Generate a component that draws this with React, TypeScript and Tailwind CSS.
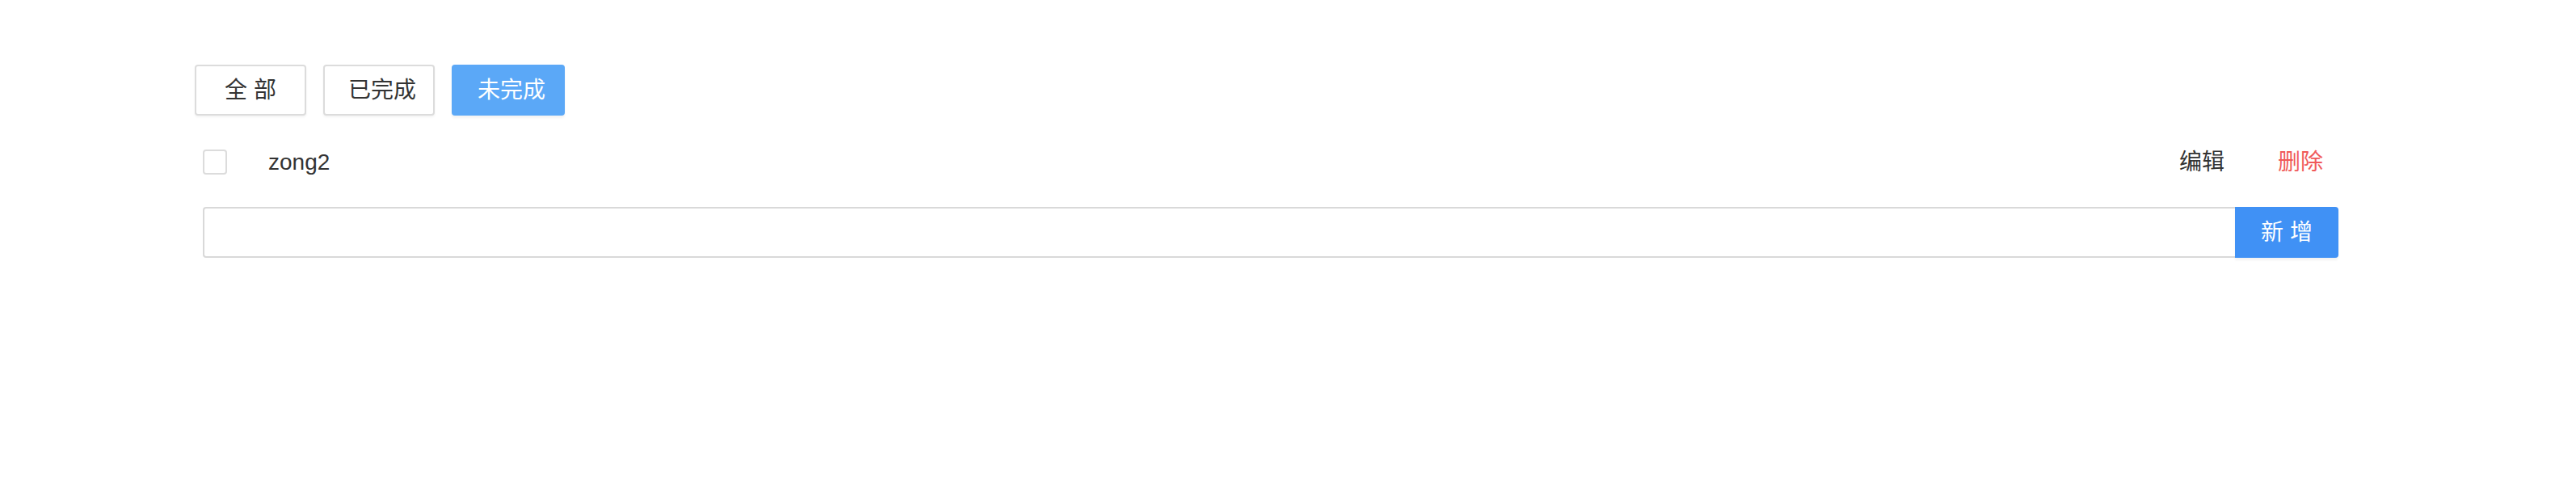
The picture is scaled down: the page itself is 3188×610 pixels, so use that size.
import React from "react";

const font = { fontFamily: '"Liberation Sans", "Noto Sans CJK SC", sans-serif' };

export default function App() {
  return (
    <div className="min-h-[610px] w-full bg-white text-[#333]" style={font}>
      <div className="pl-[241px] pt-[80px]">
        <div className="w-[2653px]">
          <div className="flex items-center gap-[21px]">
            <button className="flex h-[63px] w-[138px] items-center justify-center rounded-[4px] border-2 border-[#dcdcdc] bg-white text-[28px] leading-none text-[#333] shadow-[0_2px_3px_rgba(0,0,0,0.05)]">
              全 部
            </button>
            <button className="flex h-[63px] w-[138px] items-center justify-center rounded-[4px] border-2 border-[#dcdcdc] bg-white pl-[8px] text-[28px] leading-none text-[#333] shadow-[0_2px_3px_rgba(0,0,0,0.05)]">
              已完成
            </button>
            <button className="flex h-[63px] w-[140px] items-center justify-center rounded-[4px] bg-[#5ba8f7] pl-[8px] text-[28px] leading-none text-white shadow-[0_3px_3px_rgba(0,0,0,0.05)]">
              未完成
            </button>
          </div>
          <div className="ml-[10px] mt-[42px] flex h-[31px] items-center">
            <div className="h-[31px] w-[30px] rounded-[4px] border-2 border-[#dcdcdc] bg-white" />
            <span className="ml-[51px] text-[28px] leading-none text-[#333]">zong2</span>
            <span className="ml-auto text-[28px] leading-none text-[#333]">编辑</span>
            <span className="ml-[66px] mr-[19px] text-[28px] leading-none text-[#f05a5a]">删除</span>
          </div>
          <div className="ml-[10px] mt-[40px] flex h-[63px]">
            <input
              className="h-[63px] flex-1 rounded-l-[4px] border-2 border-r-0 border-[#d9d9d9] bg-white px-3 text-[28px] outline-none"
              style={font}
            />
            <button className="flex h-[63px] w-[128px] items-center justify-center rounded-r-[4px] bg-[#4091f5] text-[28px] leading-none text-white shadow-[0_3px_3px_rgba(0,0,0,0.05)]">
              新 增
            </button>
          </div>
        </div>
      </div>
    </div>
  );
}
